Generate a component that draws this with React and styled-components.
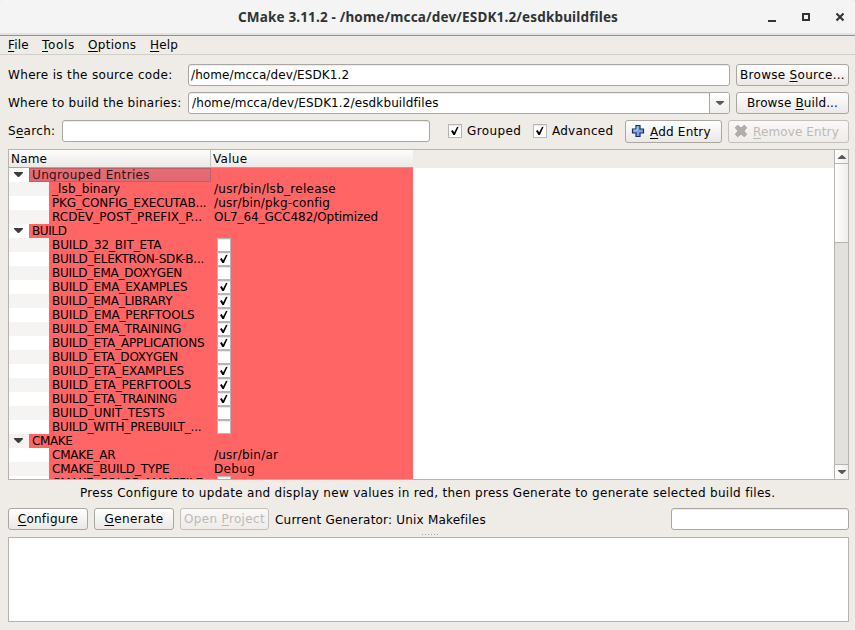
import React from "react";
import styled, { createGlobalStyle, css } from "styled-components";

const Global = createGlobalStyle`
  * { box-sizing: border-box; }
  body { margin: 0; background: #efebe7; }
`;

const line = "#b5b2af";

const Window = styled.div`
  width: 855px;
  height: 630px;
  display: flex;
  flex-direction: column;
  overflow: hidden;
  background: #efebe7;
  color: #000;
  font: 12px/14px "DejaVu Sans", sans-serif;
`;

const Label = styled.span`
  display: block;
  flex: none;
  white-space: pre;
  letter-spacing: ${(p) => p.$ls || 0}px;
  font-variant-ligatures: none;
  u {
    text-decoration: underline;
    text-decoration-thickness: 1px;
    text-underline-offset: 2px;
    text-decoration-skip-ink: none;
  }
`;

const TitleBar = styled.header`
  height: 36px;
  flex: none;
  display: grid;
  grid-template-columns: 1fr 379px 1fr;
  align-items: center;
  background: linear-gradient(#f4f4f4 0 33px, #e3e3e1 33px 35px, #93918e 35px);
  border-radius: 3px 3px 0 0;
`;

const Title = styled.h1`
  grid-column: 2;
  margin: 0 0 2px;
  white-space: nowrap;
  color: #2e3436;
  font: bold 13.5px/18px "Noto Sans", sans-serif;
  letter-spacing: 0.16px;
`;

const WindowControls = styled.div`
  display: flex;
  justify-content: flex-end;
  gap: 22px;
  padding: 0 9px 2px 0;
  svg { display: block; }
`;

const MenuBar = styled.nav`
  height: 19px;
  flex: none;
  display: grid;
  grid-template-columns: 34px 46px 62px auto;
  padding: 2px 8px 0;
  border-bottom: 1px solid #d2cecb;
`;

const Form = styled.section`
  flex: none;
  display: flex;
  flex-direction: column;
  gap: 6px;
  padding: 9px 6px 0 8px;
`;

const FormRow = styled.div`
  display: grid;
  height: ${(p) => p.$h || 22}px;
  align-items: start;
  grid-template-columns: ${(p) => p.$cols};
`;

const Caption = styled.div`
  padding-top: 4px;
`;

const Field = styled.div`
  height: 22px;
  width: ${(p) => p.$w}px;
  display: flex;
  align-items: center;
  padding-left: ${(p) => p.$pad || 2}px;
  background: #fff;
  border: 1px solid #aaa6a3;
  border-radius: 3px;
  box-shadow: inset 0 1px 0 #eeeceb;
`;

const ComboArrow = styled.div`
  margin-left: auto;
  width: 20px;
  height: 20px;
  display: flex;
  align-items: center;
  justify-content: center;
  border-left: 1px solid #aaa6a3;
  border-radius: 0 2px 2px 0;
  background: linear-gradient(#fff, #f0eeec);
`;

const Button = styled.div`
  width: ${(p) => p.$w}px;
  height: ${(p) => p.$h || 22}px;
  display: flex;
  align-items: center;
  justify-content: ${(p) => (p.$pad ? "flex-start" : "center")};
  padding-left: ${(p) => p.$pad || 0}px;
  gap: ${(p) => p.$gap || 0}px;
  border: 1px solid #aaa6a3;
  border-radius: 3px;
  background: linear-gradient(#fff, #ebe8e6);
  ${(p) =>
    p.$disabled &&
    css`
      color: #bcb9b6;
      border-color: #c3c0bc;
      background: linear-gradient(#faf9f8, #eeebe8);
    `}
`;

const ButtonIcon = styled.svg`
  flex: none;
  margin-bottom: 2px;
`;

const ButtonLabel = styled.div`
  padding-top: ${(p) => p.$drop || 0}px;
`;

const CheckOption = styled.div`
  display: flex;
  align-items: center;
  height: 22px;
  gap: 5px;
`;

const Box = styled.span`
  width: 14px;
  height: 14px;
  flex: none;
  display: flex;
  background: #fff;
  border: 1px solid #b9b6b3;
  box-shadow: inset 0 1px 0 #eceae9;
`;

const Tree = styled.section`
  height: 331px;
  flex: none;
  margin: 6px 6px 0 8px;
  display: grid;
  grid-template-columns: 1fr 14px;
  overflow: hidden;
  background: #fff;
  border: 1px solid ${line};
`;

const TreeView = styled.div`
  height: 329px;
  overflow: hidden;
`;

const TreeHeader = styled.div`
  height: 18px;
  display: grid;
  grid-template-columns: 202px 202px 1fr;
  background: #efebe7;
`;

const HeaderCell = styled.div`
  padding: 2px 0 0 2px;
  border-right: ${(p) => (p.$last ? "none" : "1px solid #c6c3c0")};
  border-bottom: 1px solid #a9a6a3;
  background: linear-gradient(#fdfdfc, #ece9e6);
`;

const TreeRow = styled.div`
  height: 14px;
  display: grid;
  grid-template-columns: ${(p) => (p.$group ? "20px 182px 202px" : "40px 162px 202px")};
`;

const Branch = styled.div`
  display: flex;
  align-items: flex-start;
  padding: 4px 0 0 5px;
  background: ${(p) => (p.$alt ? "#f5f4f3" : "#fff")};
`;

const Cell = styled.div`
  overflow: hidden;
  padding-left: ${(p) => p.$pad}px;
  background: #ff6565;
  ${(p) =>
    p.$selected &&
    css`
      padding-left: ${p.$pad - 1}px;
      color: #2a1215;
      border: 1px solid #b9606a;
      background: linear-gradient(#ea6b72, #dc6a74);
      line-height: 12px;
    `}
`;

const ScrollBar = styled.div`
  display: grid;
  grid-template-rows: 14px 79px 1fr 15px;
  border-left: 1px solid ${line};
  background: #e3e1de;
`;

const ScrollPart = styled.div`
  display: flex;
  align-items: center;
  justify-content: center;
  background: linear-gradient(90deg, #fff, #efedeb);
  border-bottom: ${(p) => (p.$end ? "none" : `1px solid ${line}`)};
  border-top: ${(p) => (p.$end ? `1px solid ${line}` : "none")};
`;

const Hint = styled.p`
  margin: 0;
  height: 28px;
  flex: none;
  padding: 6px 0 0 80px;
`;

const Actions = styled.section`
  height: 22px;
  flex: none;
  display: flex;
  gap: 6px;
  padding: 0 6px 0 8px;
`;

const Generator = styled.div`
  flex: 1;
  padding-top: 5px;
`;

const Splitter = styled.div`
  height: 7px;
  flex: none;
  display: flex;
  justify-content: center;
  padding: 4px 0 0 5px;
  gap: 2px;
`;

const Dot = styled.i`
  width: 1px;
  height: 1px;
  background: #aaa6a2;
`;

const Output = styled.section`
  height: 85px;
  flex: none;
  margin: 0 6px 0 8px;
  border: 1px solid ${line};
  background: #fff;
`;

function Check({ on }) {
  return (
    <Box>
      {on && (
        <svg width="12" height="12" viewBox="0 0 12 12">
          <path d="M2 6.1 3.8 5.1 5.1 7.5 8 1.9 9.6 1.7 5.9 10H4.4Z" fill="#000" />
        </svg>
      )}
    </Box>
  );
}

function Arrow({ up, w = 9, h = 5, color = "#5b5956" }) {
  return (
    <svg width={w} height={h} viewBox="0 0 9 5" preserveAspectRatio="none">
      <path d={up ? "M0 5H9V4L5 0H4L0 4Z" : "M0 0H9V1L5 5H4L0 1Z"} fill={color} />
    </svg>
  );
}

const PlusIcon = () => (
  <ButtonIcon width="14" height="14" viewBox="0 0 14 14">
    <path d="M5 1.5H9V5H12.5V9H9V12.5H5V9H1.5V5H5Z" fill="#7da2e2" stroke="#172b68" strokeWidth="1.2" />
    <path d="M6.2 2.6V6.2H2.6" fill="none" stroke="#b9d0f5" strokeWidth="1" />
  </ButtonIcon>
);

const CrossIcon = () => (
  <ButtonIcon width="14" height="14" viewBox="0 0 14 14">
    <path
      d="M3.7 1.2 7 4.1 10.3 1.2 12.8 3.7 9.9 7 12.8 10.3 10.3 12.8 7 9.9 3.7 12.8 1.2 10.3 4.1 7 1.2 3.7Z"
      fill="#b1aeab"
      stroke="#a09d9a"
      strokeWidth=".8"
    />
  </ButtonIcon>
);

const entries = [
  { name: "Ungrouped Entries", ls: 0.36, group: true, selected: true },
  { name: "_lsb_binary", ls: 0.1, value: "/usr/bin/lsb_release", vls: 0.28 },
  { name: "PKG_CONFIG_EXECUTAB...", ls: -0.15, value: "/usr/bin/pkg-config", vls: 0.17 },
  { name: "RCDEV_POST_PREFIX_P...", ls: 0.03, value: "OL7_64_GCC482/Optimized", vls: -0.06 },
  { name: "BUILD", ls: -0.4, group: true },
  { name: "BUILD_32_BIT_ETA", ls: -0.1, on: false },
  { name: "BUILD_ELEKTRON-SDK-B...", ls: -0.2, on: true },
  { name: "BUILD_EMA_DOXYGEN", ls: -0.23, on: false },
  { name: "BUILD_EMA_EXAMPLES", ls: -0.15, on: true },
  { name: "BUILD_EMA_LIBRARY", ls: -0.22, on: true },
  { name: "BUILD_EMA_PERFTOOLS", ls: -0.13, on: true },
  { name: "BUILD_EMA_TRAINING", ls: -0.18, on: true },
  { name: "BUILD_ETA_APPLICATIONS", ls: -0.17, on: true },
  { name: "BUILD_ETA_DOXYGEN", ls: -0.23, on: false },
  { name: "BUILD_ETA_EXAMPLES", ls: -0.12, on: true },
  { name: "BUILD_ETA_PERFTOOLS", ls: -0.11, on: true },
  { name: "BUILD_ETA_TRAINING", ls: -0.19, on: true },
  { name: "BUILD_UNIT_TESTS", ls: -0.12, on: false },
  { name: "BUILD_WITH_PREBUILT_...", ls: -0.19, on: false },
  { name: "CMAKE", ls: -0.4, group: true },
  { name: "CMAKE_AR", ls: -0.2, value: "/usr/bin/ar", vls: 0.22 },
  { name: "CMAKE_BUILD_TYPE", ls: -0.18, value: "Debug", vls: 0.35 },
  { name: "CMAKE_COLOR_MAKEFILE", ls: -0.2, on: true },
];

function Entry({ item, index }) {
  return (
    <TreeRow $group={item.group}>
      <Branch $alt={index % 2 === 1}>{item.group && <Arrow color="#3f3d3b" />}</Branch>
      <Cell $pad={3} $selected={item.selected}>
        <Label $ls={item.ls}>{item.name}</Label>
      </Cell>
      <Cell $pad={item.value ? 3 : 6}>
        {item.value && <Label $ls={item.vls}>{item.value}</Label>}
        {item.on !== undefined && <Check on={item.on} />}
      </Cell>
    </TreeRow>
  );
}

export default function App() {
  return (
    <Window>
      <Global />
      <TitleBar>
        <Title>CMake 3.11.2 - /home/mcca/dev/ESDK1.2/esdkbuildfiles</Title>
        <WindowControls>
          <svg width="12" height="12" viewBox="0 0 12 12"><path d="M2 9H10V11H2Z" fill="#2e3436" /></svg>
          <svg width="12" height="12" viewBox="0 0 12 12"><path d="M3 3H9V9H3Z" fill="none" stroke="#2e3436" strokeWidth="2" /></svg>
          <svg width="12" height="12" viewBox="0 0 12 12"><path d="M2.5 2.5 9.5 9.5M9.5 2.5 2.5 9.5" stroke="#2e3436" strokeWidth="2.1" /></svg>
        </WindowControls>
      </TitleBar>
      <MenuBar>
        <Label $ls={0.2}><u>F</u>ile</Label>
        <Label $ls={0.7}><u>T</u>ools</Label>
        <Label $ls={0.3}><u>O</u>ptions</Label>
        <Label $ls={0.2}><u>H</u>elp</Label>
      </MenuBar>
      <Form>
        <FormRow $cols="180px 548px 113px">
          <Caption><Label $ls={0.33}>Where is the source code:</Label></Caption>
          <Field $w={542}><Label $ls={0.1}>/home/mcca/dev/ESDK1.2</Label></Field>
          <Button $w={113}><Label $ls={0.3}>Browse <u>S</u>ource...</Label></Button>
        </FormRow>
        <FormRow $cols="180px 548px 113px">
          <Caption><Label $ls={0.22}>Where to build the binaries:</Label></Caption>
          <Field $w={542} $pad={3}>
            <Label $ls={0.12}>/home/mcca/dev/ESDK1.2/esdkbuildfiles</Label>
            <ComboArrow><Arrow w={8} h={4} /></ComboArrow>
          </Field>
          <Button $w={113}><Label $ls={0.13}>Browse <u>B</u>uild...</Label></Button>
        </FormRow>
        <FormRow $h={23} $cols="54px 386px 85px 92px 103px 121px">
          <Caption><Label $ls={0.3}>S<u>e</u>arch:</Label></Caption>
          <Field $w={368} />
          <CheckOption><Check on /><Label $ls={0.4}>Grouped</Label></CheckOption>
          <CheckOption><Check on /><Label $ls={0.25}>Advanced</Label></CheckOption>
          <Button $w={97} $h={23} $pad={5} $gap={5}>
            <PlusIcon />
            <ButtonLabel $drop={1}><Label $ls={0.2}><u>A</u>dd Entry</Label></ButtonLabel>
          </Button>
          <Button $w={121} $h={23} $pad={5} $gap={5} $disabled>
            <CrossIcon />
            <ButtonLabel $drop={1}><Label $ls={0.12}><u>R</u>emove Entry</Label></ButtonLabel>
          </Button>
        </FormRow>
      </Form>
      <Tree>
        <TreeView>
          <TreeHeader>
            <HeaderCell><Label $ls={0.2}>Name</Label></HeaderCell>
            <HeaderCell $last><Label $ls={0.3}>Value</Label></HeaderCell>
          </TreeHeader>
          {entries.map((item, i) => <Entry key={item.name} item={item} index={i} />)}
        </TreeView>
        <ScrollBar>
          <ScrollPart><Arrow up w={8} h={4} /></ScrollPart>
          <ScrollPart />
          <span />
          <ScrollPart $end><Arrow w={8} h={4} /></ScrollPart>
        </ScrollBar>
      </Tree>
      <Hint>
        <Label $ls={0.295}>Press Configure to update and display new values in red, then press Generate to generate selected build files.</Label>
      </Hint>
      <Actions>
        <Button $w={80}><Label $ls={0.26}><u>C</u>onfigure</Label></Button>
        <Button $w={80}><Label $ls={0.38}><u>G</u>enerate</Label></Button>
        <Button $w={89} $disabled><Label $ls={0.33}>Open <u>P</u>roject</Label></Button>
        <Generator><Label $ls={0.2}>Current Generator: Unix Makefiles</Label></Generator>
        <Field $w={178} />
      </Actions>
      <Splitter>{[0, 1, 2, 3, 4, 5].map((n) => <Dot key={n} />)}</Splitter>
      <Output />
    </Window>
  );
}
